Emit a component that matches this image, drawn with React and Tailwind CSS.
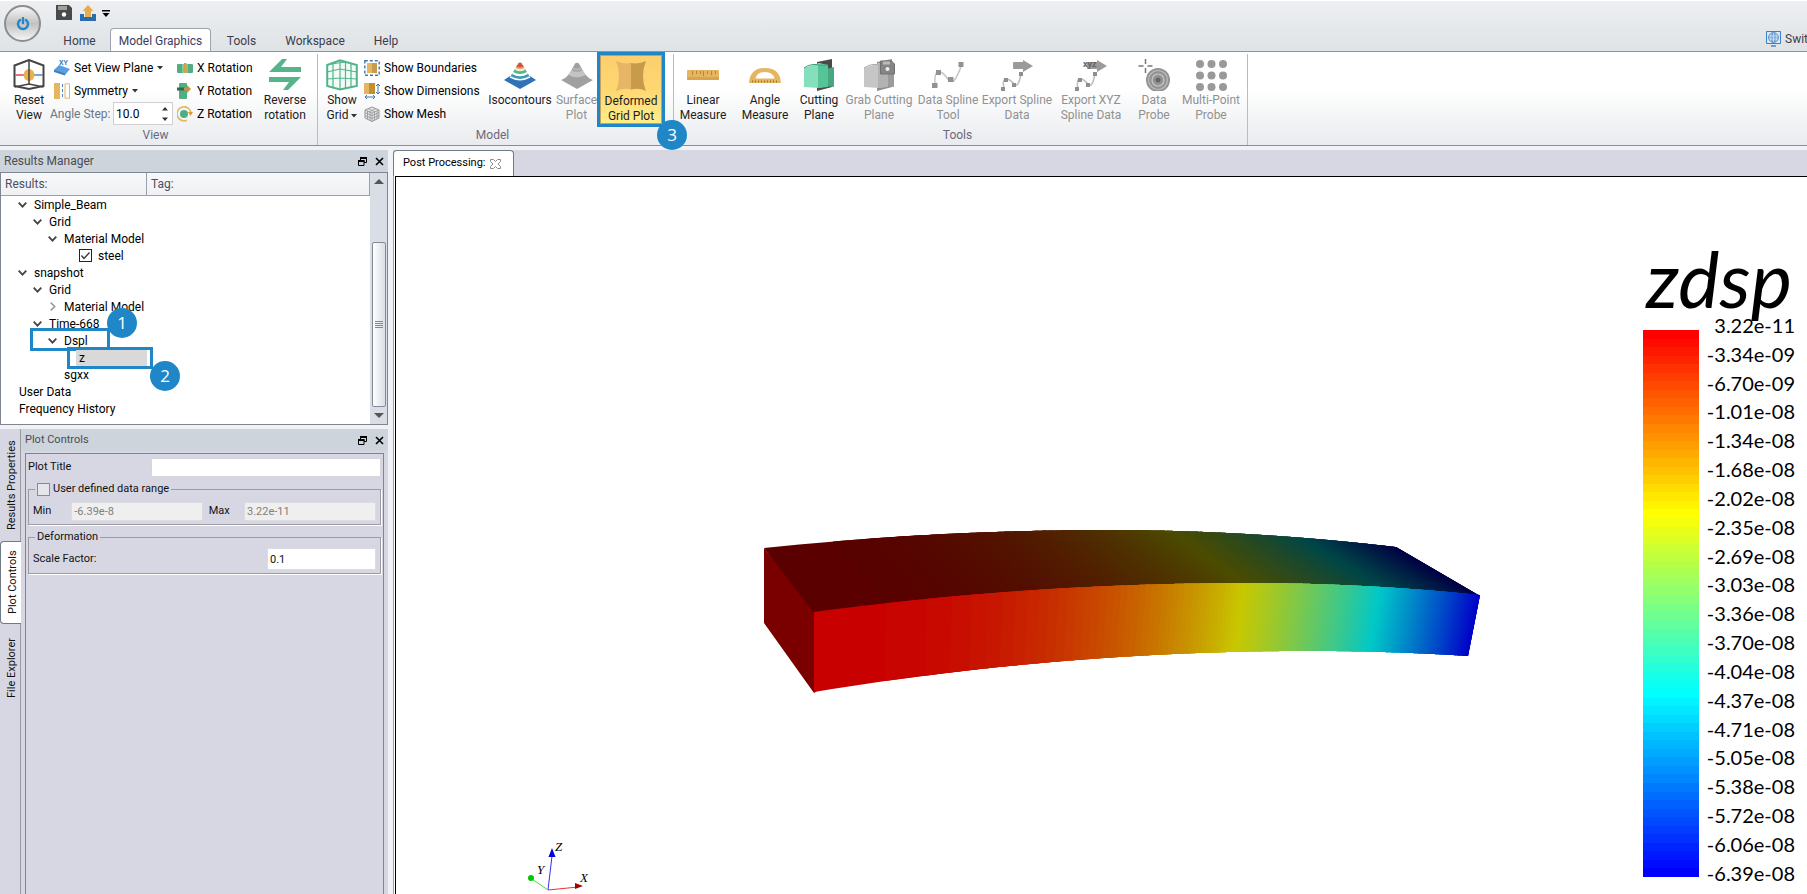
import React, { useState } from 'react';

/* ---------- color map + beam shape ---------- */

// red -> yellow -> cyan -> blue, t goes from 0 to 1
const colorMap = (t, k = 1) => {
    let rgb;
    if (t < 1 / 3) rgb = [1, t * 3, 0];
    else if (t < 2 / 3) rgb = [2 - t * 3, 1, t * 3 - 1];
    else rgb = [0, 3 - t * 3, 1];
    return `rgb(${rgb.map((c) => Math.round(c * 255 * k)).join(',')})`;
};

// a curve with a flat peak, used for every long edge of the beam
const edge = (x0, y0, px, py, x1, y1) => (u) => {
    const x = x0 + (x1 - x0) * u;
    const s = x < px ? (px - x) / (px - x0) : (x - px) / (x1 - px);
    return [x, py + ((x < px ? y0 : y1) - py) * s * s];
};

const backEdge = edge(1, 19, 345, 1, 633, 18);
const frontEdge = edge(51, 83, 486, 54, 717, 66);
const coveredEdge = edge(51, 84, 486, 55, 717, 67);
const bottomEdge = edge(51, 163, 546, 122, 705, 127);

const LEVELS = 128;
const levelPos = (k) => Math.pow(Math.min(Math.max(k, 0) / LEVELS, 1), 0.4);

const strip = (a, b, u0, u1) => {
    const top = [];
    const low = [];
    for (let i = 0; i <= 8; i++) {
        const u = u0 + ((u1 - u0) * i) / 8;
        top.push(a(u).map((n) => n.toFixed(1)).join(','));
        low.unshift(b(u).map((n) => n.toFixed(1)).join(','));
    }
    return [...top, ...low].join(' ');
};

const Beam = () => {
    const strips = Array.from({ length: LEVELS + 1 }, (_, k) => k);
    return (
        <svg width="720" height="166" viewBox="0 0 720 166" className="absolute left-[367px] top-[352px]">
            <polygon points="1,19 54,83 54,162 51,164 1,94" fill="#7a0000" />
            {/* each strip runs on under the following ones, so no seam shows between them */}
            {strips.map((k) => (
                <polygon
                    key={k}
                    points={strip(backEdge, coveredEdge, levelPos(k - 0.5), levelPos(k + 3))}
                    fill={colorMap(k / LEVELS, 0.355 - 0.09 * levelPos(k - 0.5))}
                />
            ))}
            {strips.map((k) => (
                <polygon
                    key={k}
                    points={strip(frontEdge, bottomEdge, levelPos(k - 0.5), levelPos(k + 3))}
                    fill={colorMap(k / LEVELS, 0.784)}
                />
            ))}
        </svg>
    );
};

/* ---------- icons ---------- */

const Ico = ({ s = 32, children }) => (
    <svg width={s} height={s} viewBox={`0 0 ${s} ${s}`} className="shrink-0" fill="none">{children}</svg>
);

const ResetIcon = () => (
    <Ico>
        <path d="M1.5 6.5 16 1l14.500 5.500V27L16 30 1.500 27Z" stroke="#444" strokeWidth="2" />
        <path d="M1.500 28 16 25l14.500 3" stroke="#444" strokeWidth="1.500" />
        <path d="M2.500 16h9" stroke="#e0405c" strokeWidth="1.500" />
        <path d="M21 16h9" stroke="#4c86c0" strokeWidth="1.500" />
        <ellipse cx="16" cy="16" rx="5.500" ry="6" fill="#e8b04e" />
        <path d="M16 1v25" stroke="#444" strokeWidth="1.500" />
    </Ico>
);

const ReverseIcon = () => (
    <Ico>
        <path d="M0 13 13 0h5l-6 8h20v5Z" fill="#55b58a" />
        <path d="M32 18 19 31h-5l6-8H0v-5Z" fill="#55b58a" />
    </Ico>
);

const GridIcon = () => (
    <Ico>
        <g stroke="#52b48a">
            <path d="M1.200 6 14 1.200 30.800 6v21L14 30.500 1.200 27Z" strokeWidth="2" fill="#f2fbf7" />
            <path d="M14 1v29M7 4v25M19.500 3v26M25 5v23M1 13l13-3 17 3M1 20l13-1 17 1M5 5l14-2" strokeWidth="1.200" />
        </g>
    </Ico>
);

const IsoIcon = () => (
    <Ico>
        <path d="M6 17 0 21l16 9 16-9-6-4Z" fill="#2f72b5" />
        <path d="m8.500 14-3 4.500q10.500 6 21 0l-3-4.500Z" fill="#fff" />
        <path d="m8.500 14-2 3.200q9.500 5.500 19 0l-2-3.200Z" fill="#3f9bb8" />
        <path d="m10 12-2 3q8 4.500 16 0l-2-3Z" fill="#fff" />
        <path d="m11 10-2 3q7 4 14 0l-2-3Z" fill="#55b58a" />
        <path d="m12 9-1 2q5 2.500 10 0l-1-2Z" fill="#f6ecc8" />
        <path d="m13 6-1.500 3q4.500 2.200 9 0L19 6Z" fill="#e0a070" />
        <path d="M14.500 4 12.500 7.500q3.500 1.500 7 0L17.500 4q-1.500-1-3 0Z" fill="#cf5340" />
    </Ico>
);

const SurfaceIcon = () => (
    <Ico>
        <path d="M14 4.500Q16 3 18 4.500L22 12q4 7 10 9L16 30 0 21Q6 19 10 12Z" fill="#a0a0a0" />
        <path d="m10.500 11.500-3 4.500q8.500 4.500 17 0l-3-4.500q-5.500 2.500-11 0Z" fill="#c4c4c4" />
        <path d="m12 8.500-1 2q5 2.500 10 0l-1-2q-4 1.500-8 0Z" fill="#b4b4b4" />
    </Ico>
);

const DeformedIcon = () => (
    <Ico>
        <path d="M1 1q7 3.500 15 2v26.500q-7-2-15 1.500Q7 16 1 1Z" fill="#e6b566" />
        <path d="M16 3q8 1.500 15-2-6 15 0 30-7-3.500-15-1.500Z" fill="#c89a4c" />
    </Ico>
);

const RulerIcon = () => (
    <Ico>
        <rect y="11" width="32" height="10" rx="1" fill="#e6b560" />
        <rect y="18" width="32" height="3" rx="1" fill="#d9a44a" />
        <path d="M5.500 12v4M9.500 12v3M13.500 12v3M16.500 12v5M20.500 12v3M24.500 12v4M28.500 12v3" stroke="#b58538" />
    </Ico>
);

const AngleIcon = () => (
    <Ico>
        <path d="M0 24Q1 9 16 9t16 15Z" fill="#e6b560" />
        <path d="M6.500 19.500Q8 13 16 13t9.500 6.500Z" fill="#fff" />
        <path d="M3 22.500h27" stroke="#9c7430" strokeWidth="2" strokeDasharray="1 2" />
    </Ico>
);

const CuttingIcon = ({ gray }) => (
    <Ico>
        <path d="m14 3 15-3v28l-15 4Z" fill={gray ? '#8d8d8d' : '#4a4a4a'} />
        <path d="m23 10 8-2v20l-8-1Z" fill={gray ? '#9b9b9b' : '#47a880'} />
        <path d="m1 9 15-5 9 2v21l-9 2L1 28Z" fill={gray ? '#c6c6c6' : '#85dfbd'} />
        <path d="m15 6 10 0v22l-10 1Z" fill={gray ? '#b2b2b2' : '#55c496'} />
        <path d="M1 9q7-5 15-3l9 0" stroke={gray ? '#aaa' : '#3a9a74'} />
        {gray && (
            <>
                <path d="M17.500 2h11l3 3v10h-14Z" fill="#858585" stroke="#707070" />
                <path d="M20 2.500h7v3h-7Z" fill="#bbb" />
                <circle cx="24.500" cy="10" r="2" fill="#eee" />
            </>
        )}
    </Ico>
);

const SplineIcon = () => (
    <Ico>
        <path d="M3 26Q2 14 6 13t9 6 9 0 6-15" stroke="#c4c4c4" strokeWidth="1.500" />
        <path d="M0 24h5.500v5H0ZM4 11h5v5H4ZM16 18h5.500v5H16ZM26.500 3h5v5h-5Z" fill="#929292" />
    </Ico>
);

const ExportIcon = ({ xyz }) => (
    <Ico>
        <path d="M12 4q0-1 1-1h9V1l10 6-10 6v-3h-9q-1 0-1-1Z" fill="#9b9b9b" />
        {xyz && <text x="8" y="8" className="text-[9px] font-bold" fill="#666">xyz</text>}
        <path d="M3 30Q1 20 5 20t8 5 7-10" stroke="#bdbdbd" strokeWidth="1.500" />
        <path d="M0 28h4v4H0ZM3 19h4v4H3ZM11 24h4v4h-4ZM18 13h4v4h-4Z" fill="#8f8f8f" />
    </Ico>
);

const ProbeIcon = () => (
    <Ico>
        <circle cx="20" cy="21" r="12" fill="#939393" />
        <circle cx="20" cy="21" r="9.500" stroke="#bdbdbd" strokeWidth="1.200" />
        <circle cx="20" cy="21" r="6" stroke="#c8c8c8" strokeWidth="1.200" />
        <circle cx="20" cy="21" r="2.500" fill="#666" />
        <path d="M7.500 0v5M7.500 9v5M.5 7h5M9.500 7h5" stroke="#777" strokeWidth="1.500" />
    </Ico>
);

const MultiIcon = () => (
    <Ico>
        {[5, 16.5, 28].map((y) => [5, 16.5, 28].map((x) => <circle key={`${x}-${y}`} cx={x} cy={y} r="4" fill="#999" />))}
    </Ico>
);

const PlaneIcon = () => (
    <Ico s={16}>
        <text x="5" y="5" className="text-[7px] font-bold" fill="#3c7fc4">XY</text>
        <path d="M0 10 5 5l11 4-5 6-11-4Z" fill="#5a9edc" />
        <path d="m0 10 11 3.500v2L0 12Z" fill="#3d7fc2" />
    </Ico>
);

const SymmetryIcon = () => (
    <Ico s={16}>
        <path d="M0 0h6v16H0Z" fill="#e6b560" />
        <path d="M8.500 1v14" stroke="#4c86c0" strokeDasharray="3 2" />
        <path d="M11 .8h4.500v14.400H11Z" stroke="#e6b560" />
    </Ico>
);

const XRotIcon = () => (
    <Ico s={16}>
        <rect y="4" width="16" height="9" rx="1" fill="#4fae84" />
        <path d="M5 4h6v9H5Z" fill="#7ecaa8" />
        <path d="M7 3h2.500v6H12l-3.700 4.500L4.500 9H7Z" fill="#dc9f3a" />
    </Ico>
);

const YRotIcon = () => (
    <Ico s={16}>
        <rect x="2" width="8" height="16" rx="1" fill="#4fae84" />
        <path d="M0 4.500h8v3H0Z" fill="#2c6b50" />
        <path d="M7 4.500h3V2l4 4-4 4V7.500H7Z" fill="#c8933a" />
    </Ico>
);

const ZRotIcon = () => (
    <Ico s={16}>
        <circle cx="7" cy="8" r="4" fill="#4fae84" />
        <path d="M10 14.200A7 7 0 1 1 14 7" stroke="#e6b560" strokeWidth="1.600" />
        <path d="m11 6 5 0-2.500 4Z" fill="#d99c38" />
    </Ico>
);

const BoundIcon = () => (
    <Ico s={16}>
        <path d="M.8.8h14.400v14.400H.8Z" stroke="#3f77b5" strokeWidth="1.400" strokeDasharray="3 2" />
        <path d="M3 3h6v10H3Z" fill="#e6b560" />
        <path d="M8 3h5v10H8Z" fill="#c89a4c" />
    </Ico>
);

const DimIcon = () => (
    <Ico s={16}>
        <path d="M0 0h6v11H0Z" fill="#e6b560" />
        <path d="M5 0h6v11H5Z" fill="#c2902f" />
        <path d="M14 1v10M12 3l2-2 2 2M12 9l2 2 2-2M1 14h10M3 12l-2 2 2 2M9 12l2 2-2 2" stroke="#3f77b5" />
    </Ico>
);

const MeshIcon = () => (
    <Ico s={16}>
        <path d="M1 4 8 1l7 3v8l-7 3.500L1 12Z" fill="#e6e6e6" stroke="#969696" />
        <path d="m1 4 7 3 7-3M8 7v8.500M1 6.700l7 3 7-3M1 9.500l7 3 7-3M3.500 5v8M6 6v8.500M10.500 6v8.500M13 5v8M4 2.500l7 3.500M12 2.500 5 6" stroke="#969696" strokeWidth=".8" />
    </Ico>
);

const Caret = () => (
    <svg width="6" height="4" viewBox="0 0 6 4" className="inline-block"><path d="M0 0h6L3 3.500Z" fill="#333" /></svg>
);

const DockButtons = () => (
    <div className="flex items-center gap-2 pr-1">
        <button aria-label="Float" className="block">
            <svg width="9" height="9" viewBox="0 0 9 9" fill="none" stroke="#000">
                <path d="M2.500 3V.5h6v5H6" /><path d="M2 1h7M0 4h6.500" strokeWidth="2" /><path d="M.5 3.500h5.500v5H.5Z" />
            </svg>
        </button>
        <button aria-label="Close" className="block">
            <svg width="9" height="9" viewBox="0 0 9 9" stroke="#000" strokeWidth="1.600"><path d="m1 1 7 7M8 1 1 8" /></svg>
        </button>
    </div>
);

const Bubble = ({ n, className }) => (
    <span className={`absolute z-10 flex size-[30px] items-center justify-center rounded-full bg-[#1f87c7] font-['Open_Sans',sans-serif] text-[17px] text-white ${className}`}>{n}</span>
);

/* ---------- ribbon ---------- */

const BigButton = ({ icon, lines, width, disabled, caret }) => (
    <button disabled={disabled} className={`flex flex-col items-center pt-[5px] leading-[15px] whitespace-nowrap ${width} ${disabled ? 'text-[#919191]' : 'text-[#1c1c24]'}`}>
        {icon}
        <span className="mt-0.5">{lines[0]}</span>
        <span>{lines[1]} {caret && <Caret />}</span>
    </button>
);

const SmallButton = ({ icon, label, caret }) => (
    <button className="flex h-[23px] items-center gap-1 whitespace-nowrap">
        {icon}
        <span>{label}</span>
        {caret && <Caret />}
    </button>
);

const Group = ({ title, className, children }) => (
    <section className={`flex shrink-0 flex-col border-r border-[#b9bcc4] ${className}`}>
        <div className="flex h-[73px] items-start">{children}</div>
        <h2 className="pr-1.5 text-center leading-4 text-[#6a6a7c]">{title}</h2>
    </section>
);

const Ribbon = () => (
    <div className="flex h-[95px] shrink-0 border-y border-t-[#8e959c] border-b-[#8a8d98] bg-linear-to-b from-white from-40% to-[#e9ebee] pt-0.5">
        <Group title="View" className="w-[318px]">
            <BigButton icon={<ResetIcon />} lines={['Reset', 'View']} width="ml-2 w-[42px]" />
            <div className="ml-1 flex w-[123px] flex-col pt-0.5">
                <SmallButton icon={<PlaneIcon />} label="Set View Plane" caret />
                <SmallButton icon={<SymmetryIcon />} label="Symmetry" caret />
                <label className="-ml-1 flex h-[23px] items-center justify-between pr-1 text-[#6c7488]">
                    Angle Step:
                    <span className="flex h-[23px] w-[60px] items-center justify-between border border-[#cfcfd4] bg-white pr-1">
                        <input defaultValue="10.0" className="w-10 pl-0.5 text-black outline-none" />
                        <svg width="6" height="14" viewBox="0 0 6 14" fill="#333"><path d="M0 3.500h6L3 0ZM0 10.500h6L3 14Z" /></svg>
                    </span>
                </label>
            </div>
            <div className="flex w-[84px] flex-col pt-0.5">
                <SmallButton icon={<XRotIcon />} label="X Rotation" />
                <SmallButton icon={<YRotIcon />} label="Y Rotation" />
                <SmallButton icon={<ZRotIcon />} label="Z Rotation" />
            </div>
            <BigButton icon={<ReverseIcon />} lines={['Reverse', 'rotation']} width="w-[48px]" />
        </Group>

        <Group title="Model" className="w-[356px]">
            <BigButton icon={<GridIcon />} lines={['Show', 'Grid']} width="ml-0.5 w-[44px]" caret />
            <div className="flex w-[124px] flex-col pt-0.5">
                <SmallButton icon={<BoundIcon />} label="Show Boundaries" />
                <SmallButton icon={<DimIcon />} label="Show Dimensions" />
                <SmallButton icon={<MeshIcon />} label="Show Mesh" />
            </div>
            <BigButton icon={<IsoIcon />} lines={['Isocontours', '']} width="w-[64px]" />
            <BigButton icon={<SurfaceIcon />} lines={['Surface', 'Plot']} width="w-[45px] pl-1" disabled />
            <div className="relative -mt-0.5 border-3 border-[#1f87c7] bg-linear-to-b from-[#fccf6c] via-[#fdd772] to-[#ffef8a] shadow-[inset_0_0_0_1px_#c2a060]">
                <BigButton icon={<DeformedIcon />} lines={['Deformed', 'Grid Plot']} width="h-[69px] w-[62px]" />
                <Bubble n={3} className="-right-[25px] -bottom-[26px]" />
            </div>
        </Group>

        <Group title="Tools" className="w-[574px]">
            <BigButton icon={<RulerIcon />} lines={['Linear', 'Measure']} width="w-[58px]" />
            <BigButton icon={<AngleIcon />} lines={['Angle', 'Measure']} width="w-[66px]" />
            <BigButton icon={<CuttingIcon />} lines={['Cutting', 'Plane']} width="w-[42px]" />
            <BigButton icon={<CuttingIcon gray />} lines={['Grab Cutting', 'Plane']} width="w-[78px]" disabled />
            <BigButton icon={<SplineIcon />} lines={['Data Spline', 'Tool']} width="w-[60px]" disabled />
            <BigButton icon={<ExportIcon />} lines={['Export Spline', 'Data']} width="w-[78px]" disabled />
            <BigButton icon={<ExportIcon xyz />} lines={['Export XYZ', 'Spline Data']} width="w-[70px]" disabled />
            <BigButton icon={<ProbeIcon />} lines={['Data', 'Probe']} width="w-[56px]" disabled />
            <BigButton icon={<MultiIcon />} lines={['Multi-Point', 'Probe']} width="w-[58px]" disabled />
        </Group>
    </div>
);

const TitleBar = () => (
    <header className="flex h-[51px] shrink-0 border-t border-white bg-linear-to-b from-[#edeff2] to-[#dfe3e6]">
        <button aria-label="Application menu" className="mt-1 ml-1 flex size-[37px] items-center justify-center rounded-full border-2 border-[#8d8d8d] bg-linear-to-b from-[#f6f6f6] via-[#c2c2c2] to-[#f4f4f4]">
            <svg width="14" height="14" viewBox="0 0 14 14" fill="none" stroke="#2187cc" strokeWidth="2.400" strokeLinecap="round">
                <path d="M4 3a5 5 0 1 0 6 0M7 1v5" />
            </svg>
        </button>
        <div className="ml-2 flex flex-1 flex-col justify-between">
            <div className="flex items-center gap-2 pt-1 pl-[7px]">
                <button aria-label="Save">
                    <svg width="16" height="16" viewBox="0 0 16 16"><path d="M0 0h13l3 3v12H0Z" fill="#4a4a4a" /><path d="M2 1h9v4H2Z" fill="#a0a0a0" /><circle cx="8" cy="9.500" r="2.200" fill="#fff" /></svg>
                </button>
                <button aria-label="Export">
                    <svg width="16" height="16" viewBox="0 0 16 16"><path d="M0 9h4v3h8V9h4v7H0Z" fill="#2a6cb0" /><path d="M8 0 2.500 6H5v6h6V6h2.500Z" fill="#e6ad50" /></svg>
                </button>
                <button aria-label="Customize" className="-ml-0.5">
                    <svg width="8" height="7" viewBox="0 0 8 7"><path d="M0 0h8v1.500H0ZM.5 3h7L4 7Z" /></svg>
                </button>
            </div>
            <nav className="-mb-px flex h-6 items-end leading-[22px]">
                <a href="#home" className="flex w-[61px] justify-center text-[#3c3c4a]">Home</a>
                <a href="#model" className="flex h-6 w-[101px] items-end justify-center rounded-t border border-b-0 border-[#9aa3ae] bg-white text-[#3c3c5c]">Model Graphics</a>
                <a href="#tools" className="flex w-[61px] justify-center text-[#3c3c4a]">Tools</a>
                <a href="#workspace" className="flex w-[86px] justify-center text-[#3c3c4a]">Workspace</a>
                <a href="#help" className="flex w-[56px] justify-center text-[#3c3c4a]">Help</a>
            </nav>
        </div>
        <a href="#switch" className="flex w-[41px] items-center gap-1 self-end overflow-hidden pb-1 whitespace-nowrap text-[#3c3c4a]">
            <svg width="15" height="16" viewBox="0 0 15 16" fill="none" className="shrink-0">
                <path d="M.5.5h14v12H.5Z" fill="#dbe8f6" stroke="#3f7fc6" /><path d="M5 14h5v2H5Z" fill="#6e9fd4" />
                <circle cx="7.500" cy="6.500" r="4.800" fill="#79a9de" stroke="#3f7fc6" /><path d="M3 5h9M3 8h9M7.500 2v9M5 2.500q-2 4 0 8M10 2.500q2 4 0 8" stroke="#dbe8f6" strokeWidth=".7" />
            </svg>
            Switch
        </a>
    </header>
);

/* ---------- docks ---------- */

const tree = [
    { label: 'Simple_Beam', pad: 'pl-[15px]', state: 'open' },
    { label: 'Grid', pad: 'pl-[30px]', state: 'open' },
    { label: 'Material Model', pad: 'pl-[45px]', state: 'open' },
    { label: 'steel', pad: 'pl-[60px]', check: true },
    { label: 'snapshot', pad: 'pl-[15px]', state: 'open' },
    { label: 'Grid', pad: 'pl-[30px]', state: 'open' },
    { label: 'Material Model', pad: 'pl-[45px]', state: 'closed' },
    { label: 'Time-668', pad: 'pl-[30px]', state: 'open' },
    { label: 'Dspl', pad: 'pl-[45px]', state: 'open', mark: 1 },
    { label: 'z', pad: 'pl-[60px]', mark: 2 },
    { label: 'sgxx', pad: 'pl-[45px]' },
    { label: 'User Data', pad: 'pl-0' },
    { label: 'Frequency History', pad: 'pl-0' },
];

const TreeRow = ({ row }) => {
    const [on, setOn] = useState(true);
    return (
        <li className={`relative flex h-[17px] items-center ${row.pad}`}>
            <span className="flex w-[18px] shrink-0 pl-0.5">
                {row.state === 'open' && <svg width="9" height="6" viewBox="0 0 9 6" fill="none" stroke="#444" strokeWidth="1.800"><path d="m.7.7 3.800 4 3.800-4" /></svg>}
                {row.state === 'closed' && <svg width="6" height="9" viewBox="0 0 6 9" fill="none" stroke="#999" strokeWidth="1.600" className="ml-0.5"><path d="m.7.7 4 3.800-4 3.800" /></svg>}
            </span>
            {row.check ? (
                <label className="flex items-center gap-1.5">
                    <span className="relative flex">
                        <input type="checkbox" checked={on} onChange={() => setOn(!on)} className="size-[13px] appearance-none border border-[#222] bg-white" />
                        {on && <svg width="13" height="13" viewBox="0 0 13 13" fill="none" stroke="#333" strokeWidth="1.300" className="pointer-events-none absolute inset-0"><path d="m2.500 6.500 2.500 3 5.500-6" /></svg>}
                    </span>
                    {row.label}
                </label>
            ) : (
                <span className={row.mark === 2 ? '-ml-[3px] w-[71px] bg-[#d9d9d9] pl-[3px] leading-4' : ''}>{row.label}</span>
            )}
            {row.mark === 1 && (
                <span className="absolute -top-[4px] left-[29px] h-[23px] w-[80px] border-3 border-[#1f87c7]">
                    <Bubble n={1} className="-top-[23px] -right-[30px]" />
                </span>
            )}
            {row.mark === 2 && (
                <span className="absolute -top-[2px] left-[66px] h-[22px] w-[86px] border-3 border-[#1f87c7]">
                    <Bubble n={2} className="top-[11px] -right-[30px]" />
                </span>
            )}
        </li>
    );
};

const ResultsManager = () => (
    <section className="flex flex-col">
        <div className="flex h-[22px] items-center justify-between bg-[#cdd4dc] pl-1 text-[#4c4c50]">
            <h2>Results Manager</h2>
            <DockButtons />
        </div>
        <div className="flex h-[253px] border border-[#7f8590] bg-white">
            <div className="flex-1">
                <div className="flex h-[23px] items-center border-r border-b border-[#98a2ae] bg-linear-to-b from-[#f7f8fa] to-[#eff1f4] text-[#4c5060]">
                    <span className="flex h-full w-[146px] items-center border-r border-[#98a2ae] pl-1">Results:</span>
                    <span className="pl-1">Tag:</span>
                </div>
                <ul className="text-black">
                    {tree.map((row, i) => <TreeRow key={i} row={row} />)}
                </ul>
            </div>
            <div className="flex w-[17px] flex-col items-center bg-[#d9dde5]">
                <svg width="10" height="5" viewBox="0 0 10 5" className="my-1.5" fill="#555"><path d="m0 5 5-5 5 5Z" /></svg>
                <div className="mt-[52px] flex w-[14px] flex-1 flex-col items-center justify-center gap-px rounded-xs border border-[#858b95] bg-linear-to-r from-white to-[#d9dde5]">
                    <i className="h-px w-2 bg-[#888]" /><i className="h-px w-2 bg-[#888]" /><i className="h-px w-2 bg-[#888]" /><i className="h-px w-2 bg-[#888]" />
                </div>
                <svg width="10" height="5" viewBox="0 0 10 5" className="my-1.5" fill="#555"><path d="m0 0 5 5 5-5Z" /></svg>
            </div>
        </div>
    </section>
);

const PlotControls = () => {
    const [ranged, setRanged] = useState(false);
    return (
        <section className="mt-1 flex flex-1 bg-[#d7d7e4] text-[11px] text-[#111]">
            <div className="flex w-[21px] flex-col border-r border-[#9a9a9e]">
                <button className="flex h-[112px] w-5 rotate-180 items-center justify-center pr-1 [writing-mode:vertical-rl]">Results Properties</button>
                <button className="flex h-[83px] w-[21px] rotate-180 items-center justify-center rounded-r border border-l-0 border-[#6f7a88] bg-white pr-1 [writing-mode:vertical-rl]">Plot Controls</button>
                <button className="flex h-[88px] w-5 rotate-180 items-center justify-center pr-1 [writing-mode:vertical-rl]">File Explorer</button>
            </div>
            <div className="flex flex-1 flex-col">
                <div className="flex h-[22px] items-center justify-between bg-[#cdd4dc] pl-1 text-[#4c4c50]">
                    <h2>Plot Controls</h2>
                    <DockButtons />
                </div>
                <div className="mx-1 mt-0.5 flex-1 border border-b-0 border-[#7f8590] px-0.5 pt-1">
                    <label className="flex items-center justify-between">
                        Plot Title
                        <input className="h-[19px] w-[230px] border border-[#d6d6da] bg-white px-0.5" />
                    </label>
                    <fieldset className="mt-1 border border-[#9c9ca2] px-1 pb-[3px] shadow-[1px_1px_0_white]">
                        <legend className="ml-0.5 px-0.5 leading-4">
                            <label className="flex items-center gap-[3px]">
                                <input type="checkbox" checked={ranged} onChange={() => setRanged(!ranged)} className="size-[13px] appearance-none border border-[#8a8a8e] bg-[#e6e6ea] checked:bg-[#1f87c7]" />
                                User defined data range
                            </label>
                        </legend>
                        <div className="flex items-center justify-between pt-[5px]">
                            <label htmlFor="min" className="w-[33px]">Min</label>
                            <input id="min" disabled={!ranged} defaultValue="-6.39e-8" className="h-[19px] w-[132px] border border-[#dcdce0] bg-[#efefef] px-0.5 text-[#808080]" />
                            <label htmlFor="max" className="w-[30px]">Max</label>
                            <input id="max" disabled={!ranged} defaultValue="3.22e-11" className="h-[19px] w-[132px] border border-[#dcdce0] bg-[#efefef] px-0.5 text-[#808080]" />
                        </div>
                    </fieldset>
                    <fieldset className="mt-1 border border-[#9c9ca2] px-1 pb-[3px] shadow-[1px_1px_0_white]">
                        <legend className="ml-0.5 px-0.5 leading-4">Deformation</legend>
                        <label className="flex items-center justify-between pt-[3px]">
                            Scale Factor:
                            <input defaultValue="0.1" className="h-[22px] w-[109px] border border-[#dcdce0] bg-white px-0.5" />
                        </label>
                    </fieldset>
                </div>
            </div>
        </section>
    );
};

/* ---------- 3d view ---------- */

const legend = [
    '3.22e-11', '-3.34e-09', '-6.70e-09', '-1.01e-08', '-1.34e-08', '-1.68e-08', '-2.02e-08', '-2.35e-08', '-2.69e-08', '-3.03e-08',
    '-3.36e-08', '-3.70e-08', '-4.04e-08', '-4.37e-08', '-4.71e-08', '-5.05e-08', '-5.38e-08', '-5.72e-08', '-6.06e-08', '-6.39e-08',
];

const Legend = () => (
    <div className="absolute top-[66px] right-3 w-[152px] font-[Lato,sans-serif] text-black">
        <h3 className="h-[72px] text-center text-[78px] leading-[70px] italic">zdsp</h3>
        <div className="flex justify-between">
            <div className="mt-[15px] flex h-[547px] w-[56px] flex-col">
                {Array.from({ length: 64 }, (_, i) => (
                    <div key={i} className="flex-1" style={{ backgroundColor: colorMap(i / 63) }} />
                ))}
            </div>
            <ul className="flex h-[568px] flex-col justify-between text-right text-xl leading-5">
                {legend.map((v) => <li key={v}>{v}</li>)}
            </ul>
        </div>
    </div>
);

const Axes = () => (
    <svg width="70" height="60" viewBox="0 0 70 60" className="absolute bottom-0 left-[130px] font-['Liberation_Serif',serif] text-[13px] italic">
        <path d="M22 56 26 22" stroke="#3030f0" />
        <path d="m26 14 3.500 9h-7Z" fill="#0000e0" />
        <path d="m22 56 30-3" stroke="#f03030" />
        <path d="m57 52-8-3v6Z" fill="#a00000" />
        <path d="M22 56 6 45" stroke="#40e040" />
        <circle cx="5" cy="44" r="3" fill="#00c800" />
        <text x="29" y="17">Z</text>
        <text x="11" y="40">Y</text>
        <text x="54" y="48">X</text>
    </svg>
);

const Viewer = () => (
    <main className="flex min-w-0 flex-1 flex-col bg-[#d7d7e4]">
        <div className="flex h-[26px] w-[121px] items-center gap-1 rounded-t border border-b-0 border-[#6f7a88] bg-white pl-[9px] text-[11px] whitespace-nowrap text-black">
            Post Processing:
            <button aria-label="Close tab">
                <svg width="11" height="10" viewBox="0 0 11 10" fill="none" stroke="#8c8c8c"><path d="M.5.5h3l2 2 2-2h3v2L8 5l2.500 2.500v2h-3l-2-2-2 2h-3v-2L3 5 .5 2.500Z" /></svg>
            </button>
        </div>
        <div className="flex flex-1 border-l border-[#7fa8e0] bg-white pl-px">
            <div className="relative flex-1 overflow-hidden border-t border-l border-black bg-white">
                <Beam />
                <Legend />
                <Axes />
            </div>
        </div>
    </main>
);

const App = () => (
    <div className="flex h-screen flex-col overflow-hidden bg-[#f1f2f5] font-[Roboto,sans-serif] text-xs">
        <TitleBar />
        <Ribbon />
        <div className="flex flex-1 pt-1">
            <aside className="mr-[5px] flex w-[388px] shrink-0 flex-col">
                <ResultsManager />
                <PlotControls />
            </aside>
            <Viewer />
        </div>
    </div>
);

export default App;
